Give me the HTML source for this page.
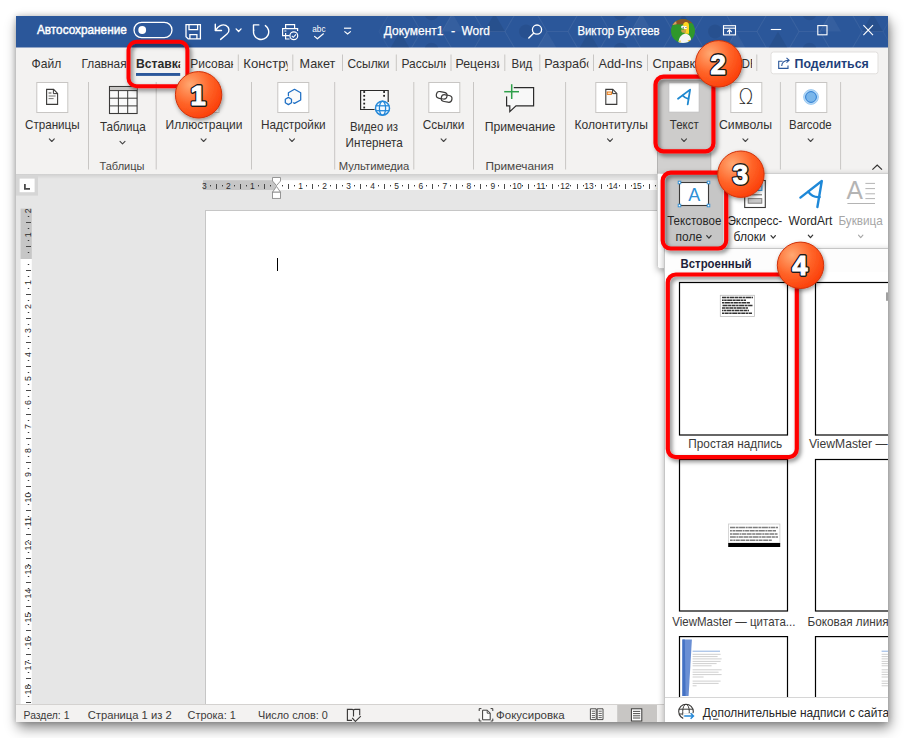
<!DOCTYPE html>
<html lang="ru">
<head>
<meta charset="utf-8">
<title>Документ1 - Word</title>
<style>
html,body{margin:0;padding:0;background:#fff;}
body{width:904px;height:738px;overflow:hidden;position:relative;font-family:"Liberation Sans", sans-serif;}
#shadow{position:absolute;left:16px;top:16px;width:872px;height:706px;box-shadow:2px 6px 12px rgba(0,0,0,.46), 0 0 6px rgba(0,0,0,.20);background:#f3f2f1;}
svg{position:absolute;left:0;top:0;}
svg text{font-family:"Liberation Sans", sans-serif;white-space:pre;}
</style>
</head>
<body>
<div id="shadow"></div>
<svg width="904" height="738" viewBox="0 0 904 738">
<defs>
<clipPath id="win"><rect x="16" y="16" width="872" height="706"/></clipPath>
<radialGradient id="badge" cx="0.32" cy="0.28" r="0.85">
<stop offset="0" stop-color="#ffa872"/><stop offset="0.5" stop-color="#ff6428"/><stop offset="1" stop-color="#fa3602"/>
</radialGradient>
<filter id="ds" x="-20%" y="-20%" width="150%" height="150%"><feDropShadow dx="2" dy="2.5" stdDeviation="2.3" flood-color="#000" flood-opacity="0.5"/></filter>
<filter id="ds2" x="-20%" y="-20%" width="150%" height="150%"><feDropShadow dx="1" dy="2" stdDeviation="2" flood-color="#000" flood-opacity="0.4"/></filter>
<filter id="pshadow" x="-10%" y="-10%" width="120%" height="120%"><feDropShadow dx="0" dy="2" stdDeviation="3" flood-color="#000" flood-opacity="0.3"/></filter>
</defs>
<g clip-path="url(#win)">
<rect x="16" y="16" width="872" height="31.7" fill="#2b579a"/>
<rect x="16" y="47.7" width="872" height="126.3" fill="#f3f2f1"/>
<rect x="16" y="174" width="872" height="530" fill="#e6e6e6"/>
<rect x="16" y="704" width="872" height="18" fill="#f3f2f1"/>
<linearGradient id="rg" x1="0" y1="0" x2="0" y2="1"><stop offset="0" stop-color="#000" stop-opacity="0.10"/><stop offset="1" stop-color="#000" stop-opacity="0"/></linearGradient>
<rect x="16" y="174" width="872" height="5" fill="url(#rg)"/>
<clipPath id="tb"><rect x="16" y="16" width="872" height="31.7"/></clipPath><g clip-path="url(#tb)">
<polygon points="421.0,-4.9 410.5,13.3 389.5,13.3 379.0,-4.9 389.5,-23.1 410.5,-23.1" fill="none" stroke="#ffffff" stroke-opacity="0.035" stroke-width="1.2"/>
<polygon points="389.5,13.3 410.5,13.3 400.0,-4.9" fill="#000" fill-opacity="0.08"/>
<polygon points="421.0,31.5 410.5,49.7 389.5,49.7 379.0,31.5 389.5,13.3 410.5,13.3" fill="none" stroke="#ffffff" stroke-opacity="0.035" stroke-width="1.2"/>
<polygon points="389.5,49.7 410.5,49.7 400.0,31.5" fill="#000" fill-opacity="0.08"/>
<polygon points="421.0,67.9 410.5,86.1 389.5,86.1 379.0,67.9 389.5,49.7 410.5,49.7" fill="none" stroke="#ffffff" stroke-opacity="0.035" stroke-width="1.2"/>
<polygon points="389.5,86.1 410.5,86.1 400.0,67.9" fill="#000" fill-opacity="0.08"/>
<polygon points="452.5,13.3 442.0,31.5 421.0,31.5 410.5,13.3 421.0,-4.9 442.0,-4.9" fill="none" stroke="#ffffff" stroke-opacity="0.035" stroke-width="1.2"/>
<circle cx="431.5" cy="13.3" r="7" fill="#000" fill-opacity="0.07"/>
<polygon points="452.5,49.7 442.0,67.9 421.0,67.9 410.5,49.7 421.0,31.5 442.0,31.5" fill="none" stroke="#ffffff" stroke-opacity="0.035" stroke-width="1.2"/>
<circle cx="431.5" cy="49.7" r="7" fill="#000" fill-opacity="0.07"/>
<polygon points="452.5,86.1 442.0,104.2 421.0,104.2 410.5,86.1 421.0,67.9 442.0,67.9" fill="none" stroke="#ffffff" stroke-opacity="0.035" stroke-width="1.2"/>
<circle cx="431.5" cy="86.1" r="7" fill="#000" fill-opacity="0.07"/>
<polygon points="484.0,-4.9 473.5,13.3 452.5,13.3 442.0,-4.9 452.5,-23.1 473.5,-23.1" fill="none" stroke="#ffffff" stroke-opacity="0.035" stroke-width="1.2"/>
<polygon points="442.0,-4.9 452.5,-23.1 463.0,-4.9" fill="#fff" fill-opacity="0.05"/>
<polygon points="484.0,31.5 473.5,49.7 452.5,49.7 442.0,31.5 452.5,13.3 473.5,13.3" fill="none" stroke="#ffffff" stroke-opacity="0.035" stroke-width="1.2"/>
<polygon points="442.0,31.5 452.5,13.3 463.0,31.5" fill="#fff" fill-opacity="0.05"/>
<polygon points="484.0,67.9 473.5,86.1 452.5,86.1 442.0,67.9 452.5,49.7 473.5,49.7" fill="none" stroke="#ffffff" stroke-opacity="0.035" stroke-width="1.2"/>
<polygon points="442.0,67.9 452.5,49.7 463.0,67.9" fill="#fff" fill-opacity="0.05"/>
<polygon points="515.5,13.3 505.0,31.5 484.0,31.5 473.5,13.3 484.0,-4.9 505.0,-4.9" fill="none" stroke="#ffffff" stroke-opacity="0.035" stroke-width="1.2"/>
<polygon points="484.0,31.5 505.0,31.5 494.5,13.3" fill="#000" fill-opacity="0.08"/>
<polygon points="515.5,49.7 505.0,67.9 484.0,67.9 473.5,49.7 484.0,31.5 505.0,31.5" fill="none" stroke="#ffffff" stroke-opacity="0.035" stroke-width="1.2"/>
<polygon points="484.0,67.9 505.0,67.9 494.5,49.7" fill="#000" fill-opacity="0.08"/>
<polygon points="515.5,86.1 505.0,104.2 484.0,104.2 473.5,86.1 484.0,67.9 505.0,67.9" fill="none" stroke="#ffffff" stroke-opacity="0.035" stroke-width="1.2"/>
<polygon points="484.0,104.2 505.0,104.2 494.5,86.1" fill="#000" fill-opacity="0.08"/>
<polygon points="547.0,-4.9 536.5,13.3 515.5,13.3 505.0,-4.9 515.5,-23.1 536.5,-23.1" fill="none" stroke="#ffffff" stroke-opacity="0.035" stroke-width="1.2"/>
<circle cx="526.0" cy="-4.9" r="7" fill="#000" fill-opacity="0.07"/>
<polygon points="547.0,31.5 536.5,49.7 515.5,49.7 505.0,31.5 515.5,13.3 536.5,13.3" fill="none" stroke="#ffffff" stroke-opacity="0.035" stroke-width="1.2"/>
<circle cx="526.0" cy="31.5" r="7" fill="#000" fill-opacity="0.07"/>
<polygon points="547.0,67.9 536.5,86.1 515.5,86.1 505.0,67.9 515.5,49.7 536.5,49.7" fill="none" stroke="#ffffff" stroke-opacity="0.035" stroke-width="1.2"/>
<circle cx="526.0" cy="67.9" r="7" fill="#000" fill-opacity="0.07"/>
<polygon points="578.5,13.3 568.0,31.5 547.0,31.5 536.5,13.3 547.0,-4.9 568.0,-4.9" fill="none" stroke="#ffffff" stroke-opacity="0.035" stroke-width="1.2"/>
<polygon points="536.5,13.3 547.0,-4.9 557.5,13.3" fill="#fff" fill-opacity="0.05"/>
<polygon points="578.5,49.7 568.0,67.9 547.0,67.9 536.5,49.7 547.0,31.5 568.0,31.5" fill="none" stroke="#ffffff" stroke-opacity="0.035" stroke-width="1.2"/>
<polygon points="536.5,49.7 547.0,31.5 557.5,49.7" fill="#fff" fill-opacity="0.05"/>
<polygon points="578.5,86.1 568.0,104.2 547.0,104.2 536.5,86.1 547.0,67.9 568.0,67.9" fill="none" stroke="#ffffff" stroke-opacity="0.035" stroke-width="1.2"/>
<polygon points="536.5,86.1 547.0,67.9 557.5,86.1" fill="#fff" fill-opacity="0.05"/>
<polygon points="610.0,-4.9 599.5,13.3 578.5,13.3 568.0,-4.9 578.5,-23.1 599.5,-23.1" fill="none" stroke="#ffffff" stroke-opacity="0.035" stroke-width="1.2"/>
<polygon points="578.5,13.3 599.5,13.3 589.0,-4.9" fill="#000" fill-opacity="0.08"/>
<polygon points="610.0,31.5 599.5,49.7 578.5,49.7 568.0,31.5 578.5,13.3 599.5,13.3" fill="none" stroke="#ffffff" stroke-opacity="0.035" stroke-width="1.2"/>
<polygon points="578.5,49.7 599.5,49.7 589.0,31.5" fill="#000" fill-opacity="0.08"/>
<polygon points="610.0,67.9 599.5,86.1 578.5,86.1 568.0,67.9 578.5,49.7 599.5,49.7" fill="none" stroke="#ffffff" stroke-opacity="0.035" stroke-width="1.2"/>
<polygon points="578.5,86.1 599.5,86.1 589.0,67.9" fill="#000" fill-opacity="0.08"/>
<polygon points="641.5,13.3 631.0,31.5 610.0,31.5 599.5,13.3 610.0,-4.9 631.0,-4.9" fill="none" stroke="#ffffff" stroke-opacity="0.035" stroke-width="1.2"/>
<circle cx="620.5" cy="13.3" r="7" fill="#000" fill-opacity="0.07"/>
<polygon points="641.5,49.7 631.0,67.9 610.0,67.9 599.5,49.7 610.0,31.5 631.0,31.5" fill="none" stroke="#ffffff" stroke-opacity="0.035" stroke-width="1.2"/>
<circle cx="620.5" cy="49.7" r="7" fill="#000" fill-opacity="0.07"/>
<polygon points="641.5,86.1 631.0,104.2 610.0,104.2 599.5,86.1 610.0,67.9 631.0,67.9" fill="none" stroke="#ffffff" stroke-opacity="0.035" stroke-width="1.2"/>
<circle cx="620.5" cy="86.1" r="7" fill="#000" fill-opacity="0.07"/>
<polygon points="673.0,-4.9 662.5,13.3 641.5,13.3 631.0,-4.9 641.5,-23.1 662.5,-23.1" fill="none" stroke="#ffffff" stroke-opacity="0.035" stroke-width="1.2"/>
<polygon points="631.0,-4.9 641.5,-23.1 652.0,-4.9" fill="#fff" fill-opacity="0.05"/>
<polygon points="673.0,31.5 662.5,49.7 641.5,49.7 631.0,31.5 641.5,13.3 662.5,13.3" fill="none" stroke="#ffffff" stroke-opacity="0.035" stroke-width="1.2"/>
<polygon points="631.0,31.5 641.5,13.3 652.0,31.5" fill="#fff" fill-opacity="0.05"/>
<polygon points="673.0,67.9 662.5,86.1 641.5,86.1 631.0,67.9 641.5,49.7 662.5,49.7" fill="none" stroke="#ffffff" stroke-opacity="0.035" stroke-width="1.2"/>
<polygon points="631.0,67.9 641.5,49.7 652.0,67.9" fill="#fff" fill-opacity="0.05"/>
<polygon points="704.5,13.3 694.0,31.5 673.0,31.5 662.5,13.3 673.0,-4.9 694.0,-4.9" fill="none" stroke="#ffffff" stroke-opacity="0.035" stroke-width="1.2"/>
<polygon points="673.0,31.5 694.0,31.5 683.5,13.3" fill="#000" fill-opacity="0.08"/>
<polygon points="704.5,49.7 694.0,67.9 673.0,67.9 662.5,49.7 673.0,31.5 694.0,31.5" fill="none" stroke="#ffffff" stroke-opacity="0.035" stroke-width="1.2"/>
<polygon points="673.0,67.9 694.0,67.9 683.5,49.7" fill="#000" fill-opacity="0.08"/>
<polygon points="704.5,86.1 694.0,104.2 673.0,104.2 662.5,86.1 673.0,67.9 694.0,67.9" fill="none" stroke="#ffffff" stroke-opacity="0.035" stroke-width="1.2"/>
<polygon points="673.0,104.2 694.0,104.2 683.5,86.1" fill="#000" fill-opacity="0.08"/>
<polygon points="736.0,-4.9 725.5,13.3 704.5,13.3 694.0,-4.9 704.5,-23.1 725.5,-23.1" fill="none" stroke="#ffffff" stroke-opacity="0.035" stroke-width="1.2"/>
<circle cx="715.0" cy="-4.9" r="7" fill="#000" fill-opacity="0.07"/>
<polygon points="736.0,31.5 725.5,49.7 704.5,49.7 694.0,31.5 704.5,13.3 725.5,13.3" fill="none" stroke="#ffffff" stroke-opacity="0.035" stroke-width="1.2"/>
<circle cx="715.0" cy="31.5" r="7" fill="#000" fill-opacity="0.07"/>
<polygon points="736.0,67.9 725.5,86.1 704.5,86.1 694.0,67.9 704.5,49.7 725.5,49.7" fill="none" stroke="#ffffff" stroke-opacity="0.035" stroke-width="1.2"/>
<circle cx="715.0" cy="67.9" r="7" fill="#000" fill-opacity="0.07"/>
<polygon points="767.5,13.3 757.0,31.5 736.0,31.5 725.5,13.3 736.0,-4.9 757.0,-4.9" fill="none" stroke="#ffffff" stroke-opacity="0.035" stroke-width="1.2"/>
<polygon points="725.5,13.3 736.0,-4.9 746.5,13.3" fill="#fff" fill-opacity="0.05"/>
<polygon points="767.5,49.7 757.0,67.9 736.0,67.9 725.5,49.7 736.0,31.5 757.0,31.5" fill="none" stroke="#ffffff" stroke-opacity="0.035" stroke-width="1.2"/>
<polygon points="725.5,49.7 736.0,31.5 746.5,49.7" fill="#fff" fill-opacity="0.05"/>
<polygon points="767.5,86.1 757.0,104.2 736.0,104.2 725.5,86.1 736.0,67.9 757.0,67.9" fill="none" stroke="#ffffff" stroke-opacity="0.035" stroke-width="1.2"/>
<polygon points="725.5,86.1 736.0,67.9 746.5,86.1" fill="#fff" fill-opacity="0.05"/>
<polygon points="799.0,-4.9 788.5,13.3 767.5,13.3 757.0,-4.9 767.5,-23.1 788.5,-23.1" fill="none" stroke="#ffffff" stroke-opacity="0.035" stroke-width="1.2"/>
<polygon points="767.5,13.3 788.5,13.3 778.0,-4.9" fill="#000" fill-opacity="0.08"/>
<polygon points="799.0,31.5 788.5,49.7 767.5,49.7 757.0,31.5 767.5,13.3 788.5,13.3" fill="none" stroke="#ffffff" stroke-opacity="0.035" stroke-width="1.2"/>
<polygon points="767.5,49.7 788.5,49.7 778.0,31.5" fill="#000" fill-opacity="0.08"/>
<polygon points="799.0,67.9 788.5,86.1 767.5,86.1 757.0,67.9 767.5,49.7 788.5,49.7" fill="none" stroke="#ffffff" stroke-opacity="0.035" stroke-width="1.2"/>
<polygon points="767.5,86.1 788.5,86.1 778.0,67.9" fill="#000" fill-opacity="0.08"/>
<polygon points="830.5,13.3 820.0,31.5 799.0,31.5 788.5,13.3 799.0,-4.9 820.0,-4.9" fill="none" stroke="#ffffff" stroke-opacity="0.035" stroke-width="1.2"/>
<circle cx="809.5" cy="13.3" r="7" fill="#000" fill-opacity="0.07"/>
<polygon points="830.5,49.7 820.0,67.9 799.0,67.9 788.5,49.7 799.0,31.5 820.0,31.5" fill="none" stroke="#ffffff" stroke-opacity="0.035" stroke-width="1.2"/>
<circle cx="809.5" cy="49.7" r="7" fill="#000" fill-opacity="0.07"/>
<polygon points="830.5,86.1 820.0,104.2 799.0,104.2 788.5,86.1 799.0,67.9 820.0,67.9" fill="none" stroke="#ffffff" stroke-opacity="0.035" stroke-width="1.2"/>
<circle cx="809.5" cy="86.1" r="7" fill="#000" fill-opacity="0.07"/>
<polygon points="862.0,-4.9 851.5,13.3 830.5,13.3 820.0,-4.9 830.5,-23.1 851.5,-23.1" fill="none" stroke="#ffffff" stroke-opacity="0.035" stroke-width="1.2"/>
<polygon points="820.0,-4.9 830.5,-23.1 841.0,-4.9" fill="#fff" fill-opacity="0.05"/>
<polygon points="862.0,31.5 851.5,49.7 830.5,49.7 820.0,31.5 830.5,13.3 851.5,13.3" fill="none" stroke="#ffffff" stroke-opacity="0.035" stroke-width="1.2"/>
<polygon points="820.0,31.5 830.5,13.3 841.0,31.5" fill="#fff" fill-opacity="0.05"/>
<polygon points="862.0,67.9 851.5,86.1 830.5,86.1 820.0,67.9 830.5,49.7 851.5,49.7" fill="none" stroke="#ffffff" stroke-opacity="0.035" stroke-width="1.2"/>
<polygon points="820.0,67.9 830.5,49.7 841.0,67.9" fill="#fff" fill-opacity="0.05"/>
<polygon points="893.5,13.3 883.0,31.5 862.0,31.5 851.5,13.3 862.0,-4.9 883.0,-4.9" fill="none" stroke="#ffffff" stroke-opacity="0.035" stroke-width="1.2"/>
<polygon points="862.0,31.5 883.0,31.5 872.5,13.3" fill="#000" fill-opacity="0.08"/>
<polygon points="893.5,49.7 883.0,67.9 862.0,67.9 851.5,49.7 862.0,31.5 883.0,31.5" fill="none" stroke="#ffffff" stroke-opacity="0.035" stroke-width="1.2"/>
<polygon points="862.0,67.9 883.0,67.9 872.5,49.7" fill="#000" fill-opacity="0.08"/>
<polygon points="893.5,86.1 883.0,104.2 862.0,104.2 851.5,86.1 862.0,67.9 883.0,67.9" fill="none" stroke="#ffffff" stroke-opacity="0.035" stroke-width="1.2"/>
<polygon points="862.0,104.2 883.0,104.2 872.5,86.1" fill="#000" fill-opacity="0.08"/>
</g>
<text x="37.0" y="34.3" font-size="12.8" font-weight="400" fill="#ffffff" textLength="89.8" lengthAdjust="spacingAndGlyphs" stroke="#ffffff" stroke-width="0.45">Автосохранение</text>
<rect x="134" y="22.3" width="38" height="15.4" fill="none" stroke="#ffffff" stroke-width="1.3" rx="7.7"/>
<circle cx="142.2" cy="30" r="3.9" fill="#fff"/>
<path d="M186 24.6 H200.4 V38.9 H188.2 L186 36.7 Z" fill="none" stroke="#ffffff" stroke-width="1.3" stroke-linejoin="miter"/>
<path d="M189 24.6 V29.6 H197.6 V24.6" fill="none" stroke="#ffffff" stroke-width="1.3"/>
<path d="M189.9 38.9 V34.7 H196.9 V38.9" fill="none" stroke="#ffffff" stroke-width="1.3"/>
<path d="M215.3 24.2 V30.5 H221.5" fill="none" stroke="#ffffff" stroke-width="1.4" stroke-linecap="round" stroke-linejoin="round"/>
<path d="M215.6 30.3 C218 26 222.4 23.8 225.8 25.4 C229.8 27.4 229.8 31.8 227 34 L220.6 39.4" fill="none" stroke="#ffffff" stroke-width="1.4" stroke-linecap="round"/>
<path d="M236.1 28.9 L238.6 31.5 L241.1 28.9" fill="none" stroke="#ffffff" stroke-width="1.3" stroke-linecap="round" stroke-linejoin="round"/>
<path d="M258.8 24.9 H253.5 V30.6" fill="none" stroke="#ffffff" stroke-width="1.4" stroke-linecap="round" stroke-linejoin="round"/>
<path d="M265.4 25.6 A7.6 7.6 0 1 1 253.7 30.2" fill="none" stroke="#ffffff" stroke-width="1.4" stroke-linecap="round"/>
<path d="M285.6 28.4 V24.6 H294.6 V28.4" fill="none" stroke="#ffffff" stroke-width="1.2"/>
<path d="M289.6 35.6 H282.6 V28.6 H297.6 V31" fill="none" stroke="#ffffff" stroke-width="1.2"/>
<path d="M285.6 33 V39 H289.6" fill="none" stroke="#ffffff" stroke-width="1.2"/>
<circle cx="293.8" cy="35.8" r="3.9" fill="none" stroke="#fff" stroke-width="1.2"/>
<path d="M291.8 35.8 L293.3 37.3 L296 34.4" fill="none" stroke="#ffffff" stroke-width="1.1"/>
<line x1="284.4" y1="31" x2="286.4" y2="31" stroke="#ffffff" stroke-width="1"/>
<text x="312.3" y="31.6" font-size="9.6" font-weight="400" fill="#ffffff" textLength="13.2" lengthAdjust="spacingAndGlyphs">abc</text>
<path d="M314.6 36.4 L317.4 38.8 L323.4 33.8" fill="none" stroke="#ffffff" stroke-width="1.2" stroke-linecap="round" stroke-linejoin="round"/>
<line x1="344" y1="28.2" x2="351.2" y2="28.2" stroke="#ffffff" stroke-width="1.2"/>
<path d="M344.4 31.4 L347.6 34 L350.8 31.4" fill="none" stroke="#ffffff" stroke-width="1.2"/>
<text x="383.8" y="34.8" font-size="12.6" font-weight="400" fill="#ffffff" textLength="59.6" lengthAdjust="spacingAndGlyphs" stroke="#ffffff" stroke-width="0.25">Документ1</text>
<text x="451.0" y="34.8" font-size="12.6" font-weight="400" fill="#ffffff" textLength="4.2" lengthAdjust="spacingAndGlyphs" stroke="#ffffff" stroke-width="0.25">-</text>
<text x="461.6" y="34.8" font-size="12.6" font-weight="400" fill="#ffffff" textLength="28.2" lengthAdjust="spacingAndGlyphs" stroke="#ffffff" stroke-width="0.25">Word</text>
<circle cx="537" cy="29.6" r="4.6" fill="none" stroke="#fff" stroke-width="1.3"/>
<line x1="533.6" y1="33.2" x2="528.8" y2="38" stroke="#ffffff" stroke-width="1.4" stroke-linecap="round"/>
<text x="577.4" y="35.4" font-size="12.4" font-weight="400" fill="#ffffff" textLength="82.2" lengthAdjust="spacingAndGlyphs" stroke="#ffffff" stroke-width="0.25">Виктор Бухтеев</text>
<clipPath id="av"><circle cx="683" cy="31" r="12"/></clipPath>
<g clip-path="url(#av)">
<rect x="670" y="18" width="26" height="26" fill="#2f982b"/>
<path d="M670 18 H696 V23.6 L690 23 L683 24.6 L676 24.2 L670 25.4 Z" fill="#8a5426"/>
<path d="M672 21.4 L676 20 L676.6 24.2 L672.4 25 Z" fill="#d9a066"/>
<path d="M683.2 25.6 C683 22.4 685 21.8 686.4 21.9 C688.6 22 689.2 24 689 27 V33.8 H684.6 V31.6 Z" fill="#ffd521"/>
<ellipse cx="682.8" cy="27" rx="1.7" ry="1.5" fill="#fff"/><ellipse cx="685.4" cy="27.4" rx="1.7" ry="1.5" fill="#fff"/>
<circle cx="683.2" cy="27.2" r="0.5" fill="#111"/><circle cx="686" cy="27.4" r="0.5" fill="#111"/>
<path d="M681.2 29.4 H686 V32.8 H683 C681.6 32.4 681 31 681.2 29.4 Z" fill="#c9a34a"/>
<path d="M678.4 43.5 C678.6 38 681 34.2 685.6 33.8 C690 34 691.6 38 691.2 43.5 Z" fill="#f4f4f6"/>
<path d="M678.6 41.2 L680.4 40.2 L680.8 42.6 Z M687.4 40.8 L690.6 39.6 L689.6 42 Z" fill="#f2c318"/>
</g>
<rect x="723.5" y="25.7" width="12" height="9.2" fill="none" stroke="#ffffff" stroke-width="1.1"/>
<line x1="723.5" y1="28.2" x2="735.5" y2="28.2" stroke="#ffffff" stroke-width="1.1"/>
<path d="M729.5 34 V30 M727.3 32 L729.5 29.8 L731.7 32" fill="none" stroke="#ffffff" stroke-width="1.1"/>
<line x1="770.8" y1="29.5" x2="781.2" y2="29.5" stroke="#ffffff" stroke-width="1.1"/>
<rect x="817.8" y="25.6" width="9.2" height="9.2" fill="none" stroke="#ffffff" stroke-width="1.1"/>
<path d="M863.4 25.2 L873 35.2 M873 25.2 L863.4 35.2" fill="none" stroke="#ffffff" stroke-width="1.15"/>
<text x="31.5" y="68.3" font-size="12.7" font-weight="400" fill="#323130" textLength="29.7" lengthAdjust="spacingAndGlyphs">Файл</text>
<text x="81.5" y="68.3" font-size="12.7" font-weight="400" fill="#323130" textLength="45.1" lengthAdjust="spacingAndGlyphs">Главная</text>
<clipPath id="c1"><rect x="130" y="50" width="50.2" height="24"/></clipPath>
<text x="135.9" y="67.5" font-size="12.7" font-weight="700" fill="#2b2b2b" textLength="48.7" lengthAdjust="spacingAndGlyphs" clip-path="url(#c1)">Вставка</text>
<rect x="136" y="73" width="44.2" height="2.9" fill="#2b579a"/>
<clipPath id="t1"><rect x="185" y="50" width="48.19999999999999" height="24"/></clipPath>
<text x="190.2" y="68.3" font-size="12.7" font-weight="400" fill="#323130" textLength="60.4" lengthAdjust="spacingAndGlyphs" clip-path="url(#t1)">Рисование</text>
<clipPath id="t2"><rect x="240" y="50" width="47.60000000000002" height="24"/></clipPath>
<text x="243.3" y="68.3" font-size="12.7" font-weight="400" fill="#323130" textLength="75.1" lengthAdjust="spacingAndGlyphs" clip-path="url(#t2)">Конструктор</text>
<text x="299.5" y="68.3" font-size="12.7" font-weight="400" fill="#323130" textLength="35.8" lengthAdjust="spacingAndGlyphs">Макет</text>
<text x="347.5" y="68.3" font-size="12.7" font-weight="400" fill="#323130" textLength="42.0" lengthAdjust="spacingAndGlyphs">Ссылки</text>
<clipPath id="t3"><rect x="398" y="50" width="48" height="24"/></clipPath>
<text x="401.5" y="68.3" font-size="12.7" font-weight="400" fill="#323130" textLength="53.8" lengthAdjust="spacingAndGlyphs" clip-path="url(#t3)">Рассылки</text>
<clipPath id="t4"><rect x="452" y="50" width="47.39999999999998" height="24"/></clipPath>
<text x="455.5" y="68.3" font-size="12.7" font-weight="400" fill="#323130" textLength="95.5" lengthAdjust="spacingAndGlyphs" clip-path="url(#t4)">Рецензирование</text>
<text x="511.5" y="68.3" font-size="12.7" font-weight="400" fill="#323130" textLength="20.8" lengthAdjust="spacingAndGlyphs">Вид</text>
<clipPath id="t5"><rect x="541" y="50" width="47.60000000000002" height="24"/></clipPath>
<text x="544.3" y="68.3" font-size="12.7" font-weight="400" fill="#323130" textLength="73.7" lengthAdjust="spacingAndGlyphs" clip-path="url(#t5)">Разработчик</text>
<text x="598.5" y="68.3" font-size="12.7" font-weight="400" fill="#323130" textLength="43.8" lengthAdjust="spacingAndGlyphs">Add-Ins</text>
<clipPath id="t6"><rect x="650" y="50" width="47" height="24"/></clipPath>
<text x="652.5" y="68.3" font-size="12.7" font-weight="400" fill="#323130" textLength="50.0" lengthAdjust="spacingAndGlyphs" clip-path="url(#t6)">Справка</text>
<clipPath id="t7"><rect x="704" y="50" width="48" height="24"/></clipPath>
<text x="705.2" y="68.3" font-size="12.7" font-weight="400" fill="#323130" textLength="52.0" lengthAdjust="spacingAndGlyphs" clip-path="url(#t7)">Foxit PDF</text>
<line x1="238.3" y1="54.5" x2="238.3" y2="71" stroke="#c8c6c4" stroke-width="1"/>
<line x1="292.8" y1="54.5" x2="292.8" y2="71" stroke="#c8c6c4" stroke-width="1"/>
<line x1="342.5" y1="54.5" x2="342.5" y2="71" stroke="#c8c6c4" stroke-width="1"/>
<line x1="396.3" y1="54.5" x2="396.3" y2="71" stroke="#c8c6c4" stroke-width="1"/>
<line x1="451" y1="54.5" x2="451" y2="71" stroke="#c8c6c4" stroke-width="1"/>
<line x1="504.8" y1="54.5" x2="504.8" y2="71" stroke="#c8c6c4" stroke-width="1"/>
<line x1="539.8" y1="54.5" x2="539.8" y2="71" stroke="#c8c6c4" stroke-width="1"/>
<line x1="593.5" y1="54.5" x2="593.5" y2="71" stroke="#c8c6c4" stroke-width="1"/>
<line x1="647.5" y1="54.5" x2="647.5" y2="71" stroke="#c8c6c4" stroke-width="1"/>
<line x1="701.4" y1="54.5" x2="701.4" y2="71" stroke="#c8c6c4" stroke-width="1"/>
<line x1="756.8" y1="54.5" x2="756.8" y2="71" stroke="#c8c6c4" stroke-width="1"/>
<rect x="771" y="52" width="107" height="21.8" fill="#ffffff" stroke="#e1dfdd" stroke-width="1" rx="2.5"/>
<path d="M782.6 61.3 H778.7 V68.4 H788 V65.6" fill="none" stroke="#2b579a" stroke-width="1.1"/>
<path d="M781.7 66 C781.8 62.6 784.2 60.5 788.8 60.3 M786.5 57.9 L789.1 60.3 L786.5 62.7" fill="none" stroke="#2b579a" stroke-width="1.1"/>
<text x="794.6" y="68.3" font-size="12.7" font-weight="700" fill="#1e3f7a" textLength="74.2" lengthAdjust="spacingAndGlyphs">Поделиться</text>
<line x1="88.5" y1="82" x2="88.5" y2="169.5" stroke="#c8c6c4" stroke-width="1"/>
<line x1="156.2" y1="82" x2="156.2" y2="169.5" stroke="#c8c6c4" stroke-width="1"/>
<line x1="251.5" y1="82" x2="251.5" y2="169.5" stroke="#c8c6c4" stroke-width="1"/>
<line x1="334.7" y1="82" x2="334.7" y2="169.5" stroke="#c8c6c4" stroke-width="1"/>
<line x1="413.8" y1="82" x2="413.8" y2="169.5" stroke="#c8c6c4" stroke-width="1"/>
<line x1="473.5" y1="82" x2="473.5" y2="169.5" stroke="#c8c6c4" stroke-width="1"/>
<line x1="565.6" y1="82" x2="565.6" y2="169.5" stroke="#c8c6c4" stroke-width="1"/>
<line x1="780.4" y1="82" x2="780.4" y2="169.5" stroke="#c8c6c4" stroke-width="1"/>
<line x1="840.6" y1="82" x2="840.6" y2="169.5" stroke="#c8c6c4" stroke-width="1"/>
<rect x="657" y="80" width="54" height="93.6" fill="#d1d0cf"/>
<rect x="657" y="80" width="54" height="73" fill="#cdcccb"/>
<line x1="657.5" y1="150" x2="657.5" y2="173.6" stroke="#b4b3b2" stroke-width="1"/>
<line x1="710.8" y1="150" x2="710.8" y2="173.6" stroke="#bcbbba" stroke-width="1"/>
<rect x="36.8" y="82.5" width="31" height="30" fill="#ffffff" stroke="#c8c6c4" stroke-width="1"/>
<path d="M46.6 89.4 H53.6 L57.6 93.4 V104.4 H46.6 Z" fill="#fafafa" stroke="#3b3a39" stroke-width="1.1"/>
<path d="M53.4 89.6 V93.6 H57.4" fill="none" stroke="#3b3a39" stroke-width="1"/>
<line x1="48.6" y1="93" x2="51.4" y2="93" stroke="#605e5c" stroke-width="1.2"/>
<line x1="48.6" y1="96" x2="55.6" y2="96" stroke="#797775" stroke-width="1"/>
<line x1="48.6" y1="98.6" x2="53.6" y2="98.6" stroke="#797775" stroke-width="1"/>
<text x="25.0" y="129.2" font-size="12.1" font-weight="400" fill="#323130" textLength="54.6" lengthAdjust="spacingAndGlyphs">Страницы</text>
<path d="M49.3 138.9 L51.8 141.5 L54.3 138.9" fill="none" stroke="#444" stroke-width="1.1" stroke-linecap="round" stroke-linejoin="round"/>
<rect x="109.5" y="86.5" width="27.6" height="27" fill="#fafafa" stroke="#3b3a39" stroke-width="1.1"/>
<rect x="110" y="87" width="26.6" height="3.6" fill="#c8c6c4"/>
<line x1="118.4" y1="90.6" x2="118.4" y2="113.5" stroke="#3b3a39" stroke-width="1"/>
<line x1="127.7" y1="90.6" x2="127.7" y2="113.5" stroke="#3b3a39" stroke-width="1"/>
<line x1="109.5" y1="90.6" x2="137.1" y2="90.6" stroke="#3b3a39" stroke-width="1"/>
<line x1="109.5" y1="98.2" x2="137.1" y2="98.2" stroke="#3b3a39" stroke-width="1"/>
<line x1="109.5" y1="105.9" x2="137.1" y2="105.9" stroke="#3b3a39" stroke-width="1"/>
<text x="100.0" y="131.0" font-size="12.1" font-weight="400" fill="#323130" textLength="45.8" lengthAdjust="spacingAndGlyphs">Таблица</text>
<path d="M120.0 141.3 L122.5 143.9 L125.0 141.3" fill="none" stroke="#444" stroke-width="1.1" stroke-linecap="round" stroke-linejoin="round"/>
<text x="99.5" y="169.6" font-size="11.7" font-weight="400" fill="#484644" textLength="45.0" lengthAdjust="spacingAndGlyphs">Таблицы</text>
<rect x="188.0" y="82.5" width="31" height="30" fill="#ffffff" stroke="#c8c6c4" stroke-width="1"/>
<text x="165.6" y="129.2" font-size="12.1" font-weight="400" fill="#323130" textLength="76.9" lengthAdjust="spacingAndGlyphs">Иллюстрации</text>
<path d="M201.1 138.9 L203.6 141.5 L206.1 138.9" fill="none" stroke="#444" stroke-width="1.1" stroke-linecap="round" stroke-linejoin="round"/>
<rect x="277.8" y="82.5" width="31" height="30" fill="#ffffff" stroke="#c8c6c4" stroke-width="1"/>
<path d="M288.4 95.6 V92.8 L294.5 89.3 L300.7 92.8 V100 L294.5 103.4 L293.4 102.8" fill="#fafafa" stroke="#1e6fc4" stroke-width="1.25" stroke-linejoin="round" stroke-linecap="round"/>
<path d="M291.5 102.8 L288.4 104.6 L285.3 102.8 L285.3 99.2 L288.4 97.4 L291.5 99.2 Z" fill="#fbfbfb" stroke="#1e6fc4" stroke-width="1.25" stroke-linejoin="round"/>
<text x="261.0" y="129.2" font-size="12.1" font-weight="400" fill="#323130" textLength="64.7" lengthAdjust="spacingAndGlyphs">Надстройки</text>
<path d="M289.5 138.9 L292.0 141.5 L294.5 138.9" fill="none" stroke="#444" stroke-width="1.1" stroke-linecap="round" stroke-linejoin="round"/>
<path d="M388.2 102 V90.5 H360.6 V109.5 H374.6" fill="#f8f8f8" stroke="#2b2b2b" stroke-width="1.2"/>
<rect x="363.3" y="91.1" width="1.8" height="1.8" fill="#1f1f1f"/>
<rect x="363.3" y="94.89999999999999" width="1.8" height="1.8" fill="#1f1f1f"/>
<rect x="363.3" y="98.8" width="1.8" height="1.8" fill="#1f1f1f"/>
<rect x="363.3" y="102.69999999999999" width="1.8" height="1.8" fill="#1f1f1f"/>
<rect x="363.3" y="106.6" width="1.8" height="1.8" fill="#1f1f1f"/>
<rect x="383.2" y="91.1" width="1.8" height="1.8" fill="#1f1f1f"/>
<rect x="383.2" y="94.89999999999999" width="1.8" height="1.8" fill="#1f1f1f"/>
<circle cx="382.5" cy="108.2" r="7" fill="#f3f9ff" stroke="#2488d8" stroke-width="1.5"/>
<ellipse cx="382.5" cy="108.2" rx="3.1" ry="7" fill="none" stroke="#2488d8" stroke-width="1.3"/>
<line x1="375.6" y1="105.8" x2="389.4" y2="105.8" stroke="#2488d8" stroke-width="1.3"/>
<line x1="375.6" y1="110.7" x2="389.4" y2="110.7" stroke="#2488d8" stroke-width="1.3"/>
<text x="350.0" y="131.0" font-size="12.1" font-weight="400" fill="#323130" textLength="48.0" lengthAdjust="spacingAndGlyphs">Видео из</text>
<text x="345.6" y="147.0" font-size="12.1" font-weight="400" fill="#323130" textLength="57.2" lengthAdjust="spacingAndGlyphs">Интернета</text>
<text x="338.7" y="169.6" font-size="11.7" font-weight="400" fill="#484644" textLength="70.5" lengthAdjust="spacingAndGlyphs">Мультимедиа</text>
<rect x="428.8" y="82.5" width="31" height="30" fill="#ffffff" stroke="#c8c6c4" stroke-width="1"/>
<rect x="436.3" y="91.9" width="10.8" height="6.8" rx="3.4" fill="none" stroke="#3b3a39" stroke-width="1.2" transform="rotate(10 441.7 95.3)"/>
<rect x="441.2" y="95.1" width="10.8" height="6.8" rx="3.4" fill="none" stroke="#3b3a39" stroke-width="1.2" transform="rotate(10 446.6 98.5)"/>
<text x="422.7" y="129.2" font-size="12.1" font-weight="400" fill="#323130" textLength="41.7" lengthAdjust="spacingAndGlyphs">Ссылки</text>
<path d="M441.1 138.9 L443.6 141.5 L446.1 138.9" fill="none" stroke="#444" stroke-width="1.1" stroke-linecap="round" stroke-linejoin="round"/>
<path d="M506.6 87.6 H533.6 V105.8 H516 L509.8 111.6 V105.8 H506.6 Z" fill="#f8f8f8" stroke="#2b2b2b" stroke-width="1.2"/>
<rect x="503" y="84" width="10.8" height="12.4" fill="#f3f2f1"/>
<line x1="504.2" y1="91.7" x2="519" y2="91.7" stroke="#2ea04a" stroke-width="1.5"/>
<line x1="511.7" y1="84.2" x2="511.7" y2="99" stroke="#2ea04a" stroke-width="1.5"/>
<text x="484.7" y="131.0" font-size="12.1" font-weight="400" fill="#323130" textLength="70.7" lengthAdjust="spacingAndGlyphs">Примечание</text>
<text x="485.4" y="169.6" font-size="11.7" font-weight="400" fill="#484644" textLength="68.2" lengthAdjust="spacingAndGlyphs">Примечания</text>
<rect x="595.8" y="82.5" width="31" height="30" fill="#ffffff" stroke="#c8c6c4" stroke-width="1"/>
<path d="M605.8 89.4 H612.8 L616.8 93.4 V104.4 H605.8 Z" fill="#fafafa" stroke="#3b3a39" stroke-width="1.1"/>
<path d="M612.6 89.6 V93.6 H616.6" fill="none" stroke="#3b3a39" stroke-width="1"/>
<rect x="607.2" y="92" width="4.2" height="2.4" fill="#fde3c0" stroke="#e8730c" stroke-width="0.9"/>
<text x="574.5" y="129.2" font-size="12.1" font-weight="400" fill="#323130" textLength="73.3" lengthAdjust="spacingAndGlyphs">Колонтитулы</text>
<path d="M607.5 138.9 L610.0 141.5 L612.5 138.9" fill="none" stroke="#444" stroke-width="1.1" stroke-linecap="round" stroke-linejoin="round"/>
<rect x="668.9" y="82.9" width="30.2" height="29.2" fill="#ffffff" stroke="#bebebe" stroke-width="0.8"/>
<path d="M678 98.8 L690.1 89.6 L687.7 104.3" fill="none" stroke="#1e88d0" stroke-width="1.8" stroke-linecap="round" stroke-linejoin="round"/>
<path d="M682.8 95.6 C684.4 97.4 686.4 98.4 688.4 98.8" fill="none" stroke="#1e88d0" stroke-width="1.7" stroke-linecap="round"/>
<text x="669.8" y="129.2" font-size="12.1" font-weight="400" fill="#323130" textLength="28.9" lengthAdjust="spacingAndGlyphs">Текст</text>
<path d="M681.5 138.9 L684.0 141.5 L686.5 138.9" fill="none" stroke="#444" stroke-width="1.1" stroke-linecap="round" stroke-linejoin="round"/>
<rect x="730.8" y="82.5" width="31" height="30" fill="#ffffff" stroke="#c8c6c4" stroke-width="1"/>
<text x="738.6" y="104.0" font-size="20.6" font-weight="200" fill="#2b2b2b" textLength="14.8" lengthAdjust="spacingAndGlyphs" style="font-family:'DejaVu Sans',sans-serif">Ω</text>
<text x="719.0" y="129.2" font-size="12.1" font-weight="400" fill="#323130" textLength="53.0" lengthAdjust="spacingAndGlyphs">Символы</text>
<path d="M742.9 138.9 L745.4 141.5 L747.9 138.9" fill="none" stroke="#444" stroke-width="1.1" stroke-linecap="round" stroke-linejoin="round"/>
<rect x="795.8" y="82.5" width="31" height="30" fill="#ffffff" stroke="#c8c6c4" stroke-width="1"/>
<circle cx="811" cy="97" r="7.4" fill="#b9daf6" stroke="#8cc2f0" stroke-width="0.8"/>
<circle cx="811" cy="97" r="5.4" fill="#7ab6ea" stroke="#2b7cd3" stroke-width="1"/>
<text x="789.0" y="129.2" font-size="12.1" font-weight="400" fill="#323130" textLength="42.7" lengthAdjust="spacingAndGlyphs">Barcode</text>
<path d="M808.1 138.9 L810.6 141.5 L813.1 138.9" fill="none" stroke="#444" stroke-width="1.1" stroke-linecap="round" stroke-linejoin="round"/>
<path d="M872.4 169.6 L877.2 165 L882 169.6" fill="none" stroke="#323130" stroke-width="1.2"/>
<rect x="16" y="175" width="22" height="20.6" fill="#d6d6d6"/>
<rect x="19.6" y="178.6" width="15" height="13.6" fill="#ffffff"/>
<path d="M24.9 184 V188.9 H30" fill="none" stroke="#4a4a4a" stroke-width="1.8"/>
<rect x="203" y="180.2" width="73.5" height="9.8" fill="#c6c6c6"/>
<rect x="276.5" y="180.2" width="400" height="9.8" fill="#ffffff"/>
<text x="202.0" y="189.0" font-size="9.5" font-weight="400" fill="#2a2a2a" textLength="4.7" lengthAdjust="spacingAndGlyphs">3</text>
<rect x="210" y="185" width="1" height="1.4" fill="#3a3a3a"/>
<rect x="216" y="184" width="1" height="5" fill="#4a4a4a"/>
<rect x="222" y="185" width="1" height="1.4" fill="#3a3a3a"/>
<text x="226.1" y="189.0" font-size="9.5" font-weight="400" fill="#2a2a2a" textLength="4.7" lengthAdjust="spacingAndGlyphs">2</text>
<rect x="234" y="185" width="1" height="1.4" fill="#3a3a3a"/>
<rect x="240" y="184" width="1" height="5" fill="#4a4a4a"/>
<rect x="246" y="185" width="1" height="1.4" fill="#3a3a3a"/>
<text x="250.1" y="189.0" font-size="9.5" font-weight="400" fill="#2a2a2a" textLength="4.7" lengthAdjust="spacingAndGlyphs">1</text>
<rect x="258" y="185" width="1" height="1.4" fill="#3a3a3a"/>
<rect x="264" y="184" width="1" height="5" fill="#4a4a4a"/>
<rect x="270" y="185" width="1" height="1.4" fill="#3a3a3a"/>
<rect x="282" y="185" width="1" height="1.4" fill="#3a3a3a"/>
<rect x="288" y="184" width="1" height="5" fill="#4a4a4a"/>
<rect x="294" y="185" width="1" height="1.4" fill="#3a3a3a"/>
<text x="298.2" y="189.0" font-size="9.5" font-weight="400" fill="#2a2a2a" textLength="4.7" lengthAdjust="spacingAndGlyphs">1</text>
<rect x="306" y="185" width="1" height="1.4" fill="#3a3a3a"/>
<rect x="312" y="184" width="1" height="5" fill="#4a4a4a"/>
<rect x="318" y="185" width="1" height="1.4" fill="#3a3a3a"/>
<text x="322.2" y="189.0" font-size="9.5" font-weight="400" fill="#2a2a2a" textLength="4.7" lengthAdjust="spacingAndGlyphs">2</text>
<rect x="330" y="185" width="1" height="1.4" fill="#3a3a3a"/>
<rect x="336" y="184" width="1" height="5" fill="#4a4a4a"/>
<rect x="342" y="185" width="1" height="1.4" fill="#3a3a3a"/>
<text x="346.3" y="189.0" font-size="9.5" font-weight="400" fill="#2a2a2a" textLength="4.7" lengthAdjust="spacingAndGlyphs">3</text>
<rect x="354" y="185" width="1" height="1.4" fill="#3a3a3a"/>
<rect x="360" y="184" width="1" height="5" fill="#4a4a4a"/>
<rect x="366" y="185" width="1" height="1.4" fill="#3a3a3a"/>
<text x="370.3" y="189.0" font-size="9.5" font-weight="400" fill="#2a2a2a" textLength="4.7" lengthAdjust="spacingAndGlyphs">4</text>
<rect x="378" y="185" width="1" height="1.4" fill="#3a3a3a"/>
<rect x="384" y="184" width="1" height="5" fill="#4a4a4a"/>
<rect x="390" y="185" width="1" height="1.4" fill="#3a3a3a"/>
<text x="394.3" y="189.0" font-size="9.5" font-weight="400" fill="#2a2a2a" textLength="4.7" lengthAdjust="spacingAndGlyphs">5</text>
<rect x="402" y="185" width="1" height="1.4" fill="#3a3a3a"/>
<rect x="408" y="184" width="1" height="5" fill="#4a4a4a"/>
<rect x="414" y="185" width="1" height="1.4" fill="#3a3a3a"/>
<text x="418.4" y="189.0" font-size="9.5" font-weight="400" fill="#2a2a2a" textLength="4.7" lengthAdjust="spacingAndGlyphs">6</text>
<rect x="426" y="185" width="1" height="1.4" fill="#3a3a3a"/>
<rect x="432" y="184" width="1" height="5" fill="#4a4a4a"/>
<rect x="438" y="185" width="1" height="1.4" fill="#3a3a3a"/>
<text x="442.4" y="189.0" font-size="9.5" font-weight="400" fill="#2a2a2a" textLength="4.7" lengthAdjust="spacingAndGlyphs">7</text>
<rect x="450" y="185" width="1" height="1.4" fill="#3a3a3a"/>
<rect x="456" y="184" width="1" height="5" fill="#4a4a4a"/>
<rect x="462" y="185" width="1" height="1.4" fill="#3a3a3a"/>
<text x="466.5" y="189.0" font-size="9.5" font-weight="400" fill="#2a2a2a" textLength="4.7" lengthAdjust="spacingAndGlyphs">8</text>
<rect x="474" y="185" width="1" height="1.4" fill="#3a3a3a"/>
<rect x="480" y="184" width="1" height="5" fill="#4a4a4a"/>
<rect x="486" y="185" width="1" height="1.4" fill="#3a3a3a"/>
<text x="490.5" y="189.0" font-size="9.5" font-weight="400" fill="#2a2a2a" textLength="4.7" lengthAdjust="spacingAndGlyphs">9</text>
<rect x="498" y="185" width="1" height="1.4" fill="#3a3a3a"/>
<rect x="504" y="184" width="1" height="5" fill="#4a4a4a"/>
<rect x="510" y="185" width="1" height="1.4" fill="#3a3a3a"/>
<text x="512.2" y="189.0" font-size="9.5" font-weight="400" fill="#2a2a2a" textLength="9.4" lengthAdjust="spacingAndGlyphs">10</text>
<rect x="522" y="185" width="1" height="1.4" fill="#3a3a3a"/>
<rect x="528" y="184" width="1" height="5" fill="#4a4a4a"/>
<rect x="534" y="185" width="1" height="1.4" fill="#3a3a3a"/>
<text x="536.2" y="189.0" font-size="9.5" font-weight="400" fill="#2a2a2a" textLength="9.4" lengthAdjust="spacingAndGlyphs">11</text>
<rect x="546" y="185" width="1" height="1.4" fill="#3a3a3a"/>
<rect x="552" y="184" width="1" height="5" fill="#4a4a4a"/>
<rect x="558" y="185" width="1" height="1.4" fill="#3a3a3a"/>
<text x="560.3" y="189.0" font-size="9.5" font-weight="400" fill="#2a2a2a" textLength="9.4" lengthAdjust="spacingAndGlyphs">12</text>
<rect x="570" y="185" width="1" height="1.4" fill="#3a3a3a"/>
<rect x="577" y="184" width="1" height="5" fill="#4a4a4a"/>
<rect x="583" y="185" width="1" height="1.4" fill="#3a3a3a"/>
<text x="584.3" y="189.0" font-size="9.5" font-weight="400" fill="#2a2a2a" textLength="9.4" lengthAdjust="spacingAndGlyphs">13</text>
<rect x="595" y="185" width="1" height="1.4" fill="#3a3a3a"/>
<rect x="601" y="184" width="1" height="5" fill="#4a4a4a"/>
<rect x="607" y="185" width="1" height="1.4" fill="#3a3a3a"/>
<text x="608.4" y="189.0" font-size="9.5" font-weight="400" fill="#2a2a2a" textLength="9.4" lengthAdjust="spacingAndGlyphs">14</text>
<rect x="619" y="185" width="1" height="1.4" fill="#3a3a3a"/>
<rect x="625" y="184" width="1" height="5" fill="#4a4a4a"/>
<rect x="631" y="185" width="1" height="1.4" fill="#3a3a3a"/>
<text x="632.4" y="189.0" font-size="9.5" font-weight="400" fill="#2a2a2a" textLength="9.4" lengthAdjust="spacingAndGlyphs">15</text>
<rect x="643" y="185" width="1" height="1.4" fill="#3a3a3a"/>
<rect x="649" y="184" width="1" height="5" fill="#4a4a4a"/>
<rect x="655" y="185" width="1" height="1.4" fill="#3a3a3a"/>
<text x="656.4" y="189.0" font-size="9.5" font-weight="400" fill="#2a2a2a" textLength="9.4" lengthAdjust="spacingAndGlyphs">16</text>
<rect x="667" y="185" width="1" height="1.4" fill="#3a3a3a"/>
<rect x="673" y="184" width="1" height="5" fill="#4a4a4a"/>
<path d="M272.5 177.5 H280.5 V181 L276.5 185.6 L272.5 181 Z" fill="#fff" stroke="#8c8c8c" stroke-width="0.9"/>
<path d="M272.5 192.2 L276.5 186.4 L280.5 192.2 Z" fill="#fff" stroke="#8c8c8c" stroke-width="0.9"/>
<rect x="272.5" y="192.2" width="8" height="6.2" fill="#fff" stroke="#8c8c8c" stroke-width="0.9"/>
<rect x="20.6" y="208.6" width="11.2" height="50.4" fill="#c6c6c6"/>
<rect x="20.6" y="259" width="11.2" height="445" fill="#ffffff"/>
<text transform="translate(31 213.2) rotate(-90)" font-size="9.5" fill="#2a2a2a" textLength="4.9" lengthAdjust="spacingAndGlyphs">2</text>
<rect x="27.8" y="216" width="1.4" height="1" fill="#3a3a3a"/>
<rect x="26" y="222" width="5" height="1" fill="#4a4a4a"/>
<rect x="27.8" y="228" width="1.4" height="1" fill="#3a3a3a"/>
<text transform="translate(31 237.2) rotate(-90)" font-size="9.5" fill="#2a2a2a" textLength="4.9" lengthAdjust="spacingAndGlyphs">1</text>
<rect x="27.8" y="240" width="1.4" height="1" fill="#3a3a3a"/>
<rect x="26" y="246" width="5" height="1" fill="#4a4a4a"/>
<rect x="27.8" y="252" width="1.4" height="1" fill="#3a3a3a"/>
<rect x="27.8" y="264" width="1.4" height="1" fill="#3a3a3a"/>
<rect x="26" y="270" width="5" height="1" fill="#4a4a4a"/>
<rect x="27.8" y="276" width="1.4" height="1" fill="#3a3a3a"/>
<text transform="translate(31 285.1) rotate(-90)" font-size="9.5" fill="#2a2a2a" textLength="4.9" lengthAdjust="spacingAndGlyphs">1</text>
<rect x="27.8" y="288" width="1.4" height="1" fill="#3a3a3a"/>
<rect x="26" y="294" width="5" height="1" fill="#4a4a4a"/>
<rect x="27.8" y="300" width="1.4" height="1" fill="#3a3a3a"/>
<text transform="translate(31 309.1) rotate(-90)" font-size="9.5" fill="#2a2a2a" textLength="4.9" lengthAdjust="spacingAndGlyphs">2</text>
<rect x="27.8" y="312" width="1.4" height="1" fill="#3a3a3a"/>
<rect x="26" y="318" width="5" height="1" fill="#4a4a4a"/>
<rect x="27.8" y="324" width="1.4" height="1" fill="#3a3a3a"/>
<text transform="translate(31 333.1) rotate(-90)" font-size="9.5" fill="#2a2a2a" textLength="4.9" lengthAdjust="spacingAndGlyphs">3</text>
<rect x="27.8" y="336" width="1.4" height="1" fill="#3a3a3a"/>
<rect x="26" y="342" width="5" height="1" fill="#4a4a4a"/>
<rect x="27.8" y="348" width="1.4" height="1" fill="#3a3a3a"/>
<text transform="translate(31 357.1) rotate(-90)" font-size="9.5" fill="#2a2a2a" textLength="4.9" lengthAdjust="spacingAndGlyphs">4</text>
<rect x="27.8" y="360" width="1.4" height="1" fill="#3a3a3a"/>
<rect x="26" y="366" width="5" height="1" fill="#4a4a4a"/>
<rect x="27.8" y="372" width="1.4" height="1" fill="#3a3a3a"/>
<text transform="translate(31 381.1) rotate(-90)" font-size="9.5" fill="#2a2a2a" textLength="4.9" lengthAdjust="spacingAndGlyphs">5</text>
<rect x="27.8" y="384" width="1.4" height="1" fill="#3a3a3a"/>
<rect x="26" y="390" width="5" height="1" fill="#4a4a4a"/>
<rect x="27.8" y="396" width="1.4" height="1" fill="#3a3a3a"/>
<text transform="translate(31 405.1) rotate(-90)" font-size="9.5" fill="#2a2a2a" textLength="4.9" lengthAdjust="spacingAndGlyphs">6</text>
<rect x="27.8" y="408" width="1.4" height="1" fill="#3a3a3a"/>
<rect x="26" y="414" width="5" height="1" fill="#4a4a4a"/>
<rect x="27.8" y="420" width="1.4" height="1" fill="#3a3a3a"/>
<text transform="translate(31 429.1) rotate(-90)" font-size="9.5" fill="#2a2a2a" textLength="4.9" lengthAdjust="spacingAndGlyphs">7</text>
<rect x="27.8" y="432" width="1.4" height="1" fill="#3a3a3a"/>
<rect x="26" y="438" width="5" height="1" fill="#4a4a4a"/>
<rect x="27.8" y="444" width="1.4" height="1" fill="#3a3a3a"/>
<text transform="translate(31 453.1) rotate(-90)" font-size="9.5" fill="#2a2a2a" textLength="4.9" lengthAdjust="spacingAndGlyphs">8</text>
<rect x="27.8" y="456" width="1.4" height="1" fill="#3a3a3a"/>
<rect x="26" y="462" width="5" height="1" fill="#4a4a4a"/>
<rect x="27.8" y="468" width="1.4" height="1" fill="#3a3a3a"/>
<text transform="translate(31 477.1) rotate(-90)" font-size="9.5" fill="#2a2a2a" textLength="4.9" lengthAdjust="spacingAndGlyphs">9</text>
<rect x="27.8" y="480" width="1.4" height="1" fill="#3a3a3a"/>
<rect x="26" y="486" width="5" height="1" fill="#4a4a4a"/>
<rect x="27.8" y="492" width="1.4" height="1" fill="#3a3a3a"/>
<text transform="translate(31 502.5) rotate(-90)" font-size="9.5" fill="#2a2a2a" textLength="9.8" lengthAdjust="spacingAndGlyphs">10</text>
<rect x="27.8" y="504" width="1.4" height="1" fill="#3a3a3a"/>
<rect x="26" y="510" width="5" height="1" fill="#4a4a4a"/>
<rect x="27.8" y="516" width="1.4" height="1" fill="#3a3a3a"/>
<text transform="translate(31 526.5) rotate(-90)" font-size="9.5" fill="#2a2a2a" textLength="9.8" lengthAdjust="spacingAndGlyphs">11</text>
<rect x="27.8" y="528" width="1.4" height="1" fill="#3a3a3a"/>
<rect x="26" y="534" width="5" height="1" fill="#4a4a4a"/>
<rect x="27.8" y="540" width="1.4" height="1" fill="#3a3a3a"/>
<text transform="translate(31 550.5) rotate(-90)" font-size="9.5" fill="#2a2a2a" textLength="9.8" lengthAdjust="spacingAndGlyphs">12</text>
<rect x="27.8" y="552" width="1.4" height="1" fill="#3a3a3a"/>
<rect x="26" y="558" width="5" height="1" fill="#4a4a4a"/>
<rect x="27.8" y="564" width="1.4" height="1" fill="#3a3a3a"/>
<text transform="translate(31 574.5) rotate(-90)" font-size="9.5" fill="#2a2a2a" textLength="9.8" lengthAdjust="spacingAndGlyphs">13</text>
<rect x="27.8" y="576" width="1.4" height="1" fill="#3a3a3a"/>
<rect x="26" y="582" width="5" height="1" fill="#4a4a4a"/>
<rect x="27.8" y="588" width="1.4" height="1" fill="#3a3a3a"/>
<text transform="translate(31 598.5) rotate(-90)" font-size="9.5" fill="#2a2a2a" textLength="9.8" lengthAdjust="spacingAndGlyphs">14</text>
<rect x="27.8" y="600" width="1.4" height="1" fill="#3a3a3a"/>
<rect x="26" y="606" width="5" height="1" fill="#4a4a4a"/>
<rect x="27.8" y="612" width="1.4" height="1" fill="#3a3a3a"/>
<text transform="translate(31 622.4) rotate(-90)" font-size="9.5" fill="#2a2a2a" textLength="9.8" lengthAdjust="spacingAndGlyphs">15</text>
<rect x="27.8" y="624" width="1.4" height="1" fill="#3a3a3a"/>
<rect x="26" y="630" width="5" height="1" fill="#4a4a4a"/>
<rect x="27.8" y="636" width="1.4" height="1" fill="#3a3a3a"/>
<text transform="translate(31 646.4) rotate(-90)" font-size="9.5" fill="#2a2a2a" textLength="9.8" lengthAdjust="spacingAndGlyphs">16</text>
<rect x="27.8" y="648" width="1.4" height="1" fill="#3a3a3a"/>
<rect x="26" y="654" width="5" height="1" fill="#4a4a4a"/>
<rect x="27.8" y="660" width="1.4" height="1" fill="#3a3a3a"/>
<text transform="translate(31 670.4) rotate(-90)" font-size="9.5" fill="#2a2a2a" textLength="9.8" lengthAdjust="spacingAndGlyphs">17</text>
<rect x="27.8" y="672" width="1.4" height="1" fill="#3a3a3a"/>
<rect x="26" y="678" width="5" height="1" fill="#4a4a4a"/>
<rect x="27.8" y="684" width="1.4" height="1" fill="#3a3a3a"/>
<text transform="translate(31 694.4) rotate(-90)" font-size="9.5" fill="#2a2a2a" textLength="9.8" lengthAdjust="spacingAndGlyphs">18</text>
<rect x="27.8" y="696" width="1.4" height="1" fill="#3a3a3a"/>
<rect x="26" y="702" width="5" height="1" fill="#4a4a4a"/>
<rect x="205.5" y="210.5" width="520" height="500" fill="#ffffff" stroke="#c6c6c6" stroke-width="1"/>
<line x1="277.5" y1="258" x2="277.5" y2="271" stroke="#000" stroke-width="1"/>
<rect x="16" y="704" width="872" height="18" fill="#f3f2f1"/>
<line x1="16" y1="704.5" x2="888" y2="704.5" stroke="#d4d2d0" stroke-width="1"/>
<text x="23.6" y="719.3" font-size="11.8" font-weight="400" fill="#3b3a39" textLength="45.8" lengthAdjust="spacingAndGlyphs">Раздел: 1</text>
<text x="87.7" y="719.3" font-size="11.8" font-weight="400" fill="#3b3a39" textLength="84.0" lengthAdjust="spacingAndGlyphs">Страница 1 из 2</text>
<text x="187.6" y="719.3" font-size="11.8" font-weight="400" fill="#3b3a39" textLength="48.2" lengthAdjust="spacingAndGlyphs">Строка: 1</text>
<text x="258.0" y="719.3" font-size="11.8" font-weight="400" fill="#3b3a39" textLength="69.8" lengthAdjust="spacingAndGlyphs">Число слов: 0</text>
<path d="M352 720.4 H347.4 V709.4 H352.2 C353 709.4 353.5 709.9 353.5 710.6 V716.6 M353.5 710.6 C353.5 709.9 354 709.4 354.8 709.4 H359.7 V715.2" fill="none" stroke="#3b3a39" stroke-width="1.15"/>
<path d="M352.2 718 L355.4 721.4 L360.8 716.2" fill="none" stroke="#3b3a39" stroke-width="1.1"/>
<path d="M481.4 708.6 H479.2 V711 M479.2 718.6 V721 H481.4 M490.6 721 H492.8 V718.6 M492.8 711 V708.6 H490.6" fill="none" stroke="#3b3a39" stroke-width="1"/>
<path d="M482.6 710.2 H487.4 L490.2 713 V719.8 H482.6 Z" fill="#fafafa" stroke="#3b3a39" stroke-width="1"/>
<path d="M487.2 710.4 V713.2 H490" fill="none" stroke="#3b3a39" stroke-width="0.9"/>
<text x="496.1" y="719.3" font-size="11.8" font-weight="400" fill="#3b3a39" textLength="68.6" lengthAdjust="spacingAndGlyphs">Фокусировка</text>
<path d="M590.4 708.8 H596.2 V719.6 H590.4 Z M597.2 708.8 H603 V719.6 H597.2 Z" fill="#fdfdfd" stroke="#3b3a39" stroke-width="0.9"/>
<line x1="591.8" y1="711.2" x2="595" y2="711.2" stroke="#3b3a39" stroke-width="0.8"/>
<line x1="598.6" y1="711.2" x2="601.8" y2="711.2" stroke="#3b3a39" stroke-width="0.8"/>
<line x1="591.8" y1="713.4" x2="595" y2="713.4" stroke="#3b3a39" stroke-width="0.8"/>
<line x1="598.6" y1="713.4" x2="601.8" y2="713.4" stroke="#3b3a39" stroke-width="0.8"/>
<line x1="591.8" y1="715.6" x2="595" y2="715.6" stroke="#3b3a39" stroke-width="0.8"/>
<line x1="598.6" y1="715.6" x2="601.8" y2="715.6" stroke="#3b3a39" stroke-width="0.8"/>
<line x1="591.8" y1="717.6" x2="595" y2="717.6" stroke="#3b3a39" stroke-width="0.8"/>
<line x1="598.6" y1="717.6" x2="601.8" y2="717.6" stroke="#3b3a39" stroke-width="0.8"/>
<rect x="617.2" y="705" width="39.8" height="17" fill="#c8c6c4"/>
<rect x="631.4" y="708.8" width="10.4" height="12.2" fill="#fdfdfd" stroke="#3b3a39" stroke-width="1"/>
<line x1="633" y1="711.4" x2="640.2" y2="711.4" stroke="#3b3a39" stroke-width="0.9"/>
<line x1="633" y1="713.6" x2="640.2" y2="713.6" stroke="#3b3a39" stroke-width="0.9"/>
<line x1="633" y1="715.8" x2="640.2" y2="715.8" stroke="#3b3a39" stroke-width="0.9"/>
<line x1="633" y1="718" x2="640.2" y2="718" stroke="#3b3a39" stroke-width="0.9"/>
<g filter="url(#pshadow)">
<rect x="657.5" y="173.5" width="240" height="95" fill="#ffffff" stroke="#d0d0d0" stroke-width="1" rx="2"/>
</g>
<rect x="658" y="174" width="240" height="74" fill="#ffffff"/>
<rect x="665.5" y="174" width="58" height="73" fill="#c6c6c6"/>
<rect x="679.5" y="182.5" width="29" height="23" fill="#ffffff" stroke="#3b3a39" stroke-width="1.1"/>
<text x="688.2" y="200.6" font-size="17.8" font-weight="400" fill="#2e8fd6" textLength="12.0" lengthAdjust="spacingAndGlyphs">A</text>
<rect x="678.2" y="181.2" width="2.6" height="2.6" fill="#ffffff" stroke="#2e8fd6" stroke-width="0.9"/>
<rect x="707.2" y="181.2" width="2.6" height="2.6" fill="#ffffff" stroke="#2e8fd6" stroke-width="0.9"/>
<rect x="678.2" y="204.2" width="2.6" height="2.6" fill="#ffffff" stroke="#2e8fd6" stroke-width="0.9"/>
<rect x="707.2" y="204.2" width="2.6" height="2.6" fill="#ffffff" stroke="#2e8fd6" stroke-width="0.9"/>
<text x="667.2" y="225.1" font-size="12.1" font-weight="400" fill="#262626" textLength="54.2" lengthAdjust="spacingAndGlyphs">Текстовое</text>
<text x="675.6" y="240.6" font-size="12.1" font-weight="400" fill="#262626" textLength="26.5" lengthAdjust="spacingAndGlyphs">поле</text>
<path d="M706.7 235.6 L708.9 238.2 L711.1 235.6" fill="none" stroke="#333" stroke-width="1.2" stroke-linecap="round" stroke-linejoin="round"/>
<rect x="744.7" y="180.5" width="20.6" height="27" fill="#fdfdfd" stroke="#3b3a39" stroke-width="1.1"/>
<rect x="754.5" y="183.4" width="7.4" height="7" fill="#cfe3f7" stroke="#2e8fd6" stroke-width="1"/>
<line x1="748" y1="194.8" x2="762" y2="194.8" stroke="#605e5c" stroke-width="1"/>
<rect x="748.2" y="198.6" width="13.6" height="4.6" fill="#c8c8c8" stroke="#797775" stroke-width="0.9"/>
<text x="727.4" y="225.1" font-size="12.1" font-weight="400" fill="#262626" textLength="54.8" lengthAdjust="spacingAndGlyphs">Экспресс-</text>
<text x="733.6" y="240.6" font-size="12.1" font-weight="400" fill="#262626" textLength="32.2" lengthAdjust="spacingAndGlyphs">блоки</text>
<path d="M771.0 235.6 L773.2 238.2 L775.4 235.6" fill="none" stroke="#333" stroke-width="1.2" stroke-linecap="round" stroke-linejoin="round"/>
<path d="M800.4 197.6 L821.8 181 L817.4 207" fill="none" stroke="#1e88d8" stroke-width="2.4" stroke-linecap="round" stroke-linejoin="round"/>
<path d="M808.2 191.6 C811 195.6 815.6 197.4 819.6 197" fill="none" stroke="#1e88d8" stroke-width="2.3" stroke-linecap="round"/>
<text x="788.6" y="225.1" font-size="12.1" font-weight="400" fill="#262626" textLength="43.8" lengthAdjust="spacingAndGlyphs">WordArt</text>
<path d="M808.3 235.1 L810.5 237.7 L812.7 235.1" fill="none" stroke="#333" stroke-width="1.2" stroke-linecap="round" stroke-linejoin="round"/>
<text x="846.6" y="199.0" font-size="25.6" font-weight="400" fill="#b4b4b4" textLength="16.4" lengthAdjust="spacingAndGlyphs">A</text>
<line x1="865.4" y1="183.4" x2="875" y2="183.4" stroke="#b4b4b4" stroke-width="1"/>
<line x1="865.4" y1="188.6" x2="875" y2="188.6" stroke="#b4b4b4" stroke-width="1"/>
<line x1="865.4" y1="193.8" x2="875" y2="193.8" stroke="#b4b4b4" stroke-width="1"/>
<line x1="865.4" y1="198.6" x2="875" y2="198.6" stroke="#b4b4b4" stroke-width="1"/>
<line x1="847.4" y1="203.5" x2="875" y2="203.5" stroke="#b4b4b4" stroke-width="1"/>
<text x="838.4" y="225.1" font-size="12.1" font-weight="400" fill="#a6a6a6" textLength="44.4" lengthAdjust="spacingAndGlyphs">Буквица</text>
<path d="M858.5 235.1 L860.7 237.7 L862.9 235.1" fill="none" stroke="#a6a6a6" stroke-width="1.1" stroke-linecap="round" stroke-linejoin="round"/>
<g filter="url(#pshadow)">
<rect x="664.5" y="248.5" width="240" height="480" fill="#ffffff" stroke="#c6c6c6" stroke-width="1"/>
</g>
<rect x="665" y="249" width="223" height="23" fill="#fdfdfd"/>
<text x="680.5" y="267.7" font-size="12.2" font-weight="700" fill="#1f1f3a" textLength="70.9" lengthAdjust="spacingAndGlyphs">Встроенный</text>
<rect x="679.5" y="282.5" width="108" height="152.5" fill="#ffffff" stroke="#000000" stroke-width="1.2"/>
<rect x="815.5" y="282.5" width="108" height="152.5" fill="#ffffff" stroke="#000000" stroke-width="1.2"/>
<rect x="679.5" y="459.5" width="108" height="151.5" fill="#ffffff" stroke="#000000" stroke-width="1.2"/>
<rect x="815.5" y="459.5" width="108" height="151.5" fill="#ffffff" stroke="#000000" stroke-width="1.2"/>
<rect x="679.5" y="636.6" width="108" height="70" fill="#ffffff" stroke="#000000" stroke-width="1.2"/>
<rect x="815.5" y="636.6" width="108" height="70" fill="#ffffff" stroke="#000000" stroke-width="1.2"/>
<rect x="720.3" y="295.3" width="34.2" height="21.2" fill="#ffffff" stroke="#bdbdbd" stroke-width="0.8"/>
<line x1="722" y1="297.6" x2="753" y2="297.6" stroke="#333333" stroke-width="1.5" stroke-dasharray="4 0.5 2.5 0.5 5 0.5 3 0.5" stroke-dashoffset="0.0"/>
<line x1="722" y1="300.2" x2="746" y2="300.2" stroke="#333333" stroke-width="1.5" stroke-dasharray="4 0.5 2.5 0.5 5 0.5 3 0.5" stroke-dashoffset="2.3"/>
<line x1="722" y1="302.8" x2="750" y2="302.8" stroke="#333333" stroke-width="1.5" stroke-dasharray="4 0.5 2.5 0.5 5 0.5 3 0.5" stroke-dashoffset="4.6"/>
<line x1="722" y1="305.4" x2="753" y2="305.4" stroke="#333333" stroke-width="1.5" stroke-dasharray="4 0.5 2.5 0.5 5 0.5 3 0.5" stroke-dashoffset="6.9"/>
<line x1="722" y1="308" x2="748" y2="308" stroke="#333333" stroke-width="1.5" stroke-dasharray="4 0.5 2.5 0.5 5 0.5 3 0.5" stroke-dashoffset="9.2"/>
<line x1="722" y1="310.6" x2="749" y2="310.6" stroke="#333333" stroke-width="1.5" stroke-dasharray="4 0.5 2.5 0.5 5 0.5 3 0.5" stroke-dashoffset="11.5"/>
<line x1="722" y1="313.2" x2="752" y2="313.2" stroke="#333333" stroke-width="1.5" stroke-dasharray="4 0.5 2.5 0.5 5 0.5 3 0.5" stroke-dashoffset="13.8"/>
<rect x="728.5" y="524" width="51.4" height="19" fill="#ffffff" stroke="#cccccc" stroke-width="0.8"/>
<line x1="730" y1="527.6" x2="778" y2="527.6" stroke="#7c7c7c" stroke-width="1.5" stroke-dasharray="5 0.6 3 0.5 6 0.6 2 0.5 4 0.6" stroke-dashoffset="0.0"/>
<line x1="730" y1="530.8" x2="776" y2="530.8" stroke="#7c7c7c" stroke-width="1.5" stroke-dasharray="5 0.6 3 0.5 6 0.6 2 0.5 4 0.6" stroke-dashoffset="3.1"/>
<line x1="730" y1="533.9" x2="777.5" y2="533.9" stroke="#7c7c7c" stroke-width="1.5" stroke-dasharray="5 0.6 3 0.5 6 0.6 2 0.5 4 0.6" stroke-dashoffset="6.2"/>
<line x1="730" y1="537" x2="778" y2="537" stroke="#7c7c7c" stroke-width="1.5" stroke-dasharray="5 0.6 3 0.5 6 0.6 2 0.5 4 0.6" stroke-dashoffset="9.3"/>
<line x1="730" y1="540.2" x2="772" y2="540.2" stroke="#7c7c7c" stroke-width="1.5" stroke-dasharray="5 0.6 3 0.5 6 0.6 2 0.5 4 0.6" stroke-dashoffset="12.4"/>
<rect x="728.2" y="543" width="52" height="4" fill="#000000"/>
<path d="M682.4 639.6 H691.9 L688.6 696 H682.4 Z" fill="#6a8fd4"/>
<path d="M682.4 639.6 H684.8 L685.6 696 H682.4 Z" fill="#4472c4"/>
<line x1="692.6" y1="651.2" x2="720" y2="651.2" stroke="#8fb0e0" stroke-width="1"/>
<line x1="692.6" y1="654.3" x2="720.6" y2="654.3" stroke="#cfcfcf" stroke-width="1"/>
<line x1="692.6" y1="656.6" x2="717.6" y2="656.6" stroke="#cfcfcf" stroke-width="1"/>
<line x1="692.6" y1="658.9" x2="721.6" y2="658.9" stroke="#cfcfcf" stroke-width="1"/>
<line x1="692.6" y1="661.4" x2="720.6" y2="661.4" stroke="#cfcfcf" stroke-width="1"/>
<line x1="692.6" y1="663.6" x2="716.6" y2="663.6" stroke="#cfcfcf" stroke-width="1"/>
<line x1="692.6" y1="665.8" x2="711.6" y2="665.8" stroke="#cfcfcf" stroke-width="1"/>
<line x1="692.6" y1="669.8" x2="721.6" y2="669.8" stroke="#cfcfcf" stroke-width="1"/>
<line x1="692.6" y1="672.2" x2="718.6" y2="672.2" stroke="#cfcfcf" stroke-width="1"/>
<line x1="692.6" y1="674.6" x2="721.6" y2="674.6" stroke="#cfcfcf" stroke-width="1"/>
<line x1="692.6" y1="677" x2="703.6" y2="677" stroke="#cfcfcf" stroke-width="1"/>
<line x1="692.6" y1="681.1" x2="720.6" y2="681.1" stroke="#cfcfcf" stroke-width="1"/>
<line x1="692.6" y1="683.4" x2="718.6" y2="683.4" stroke="#cfcfcf" stroke-width="1"/>
<line x1="692.6" y1="685.8" x2="696.6" y2="685.8" stroke="#cfcfcf" stroke-width="1"/>
<line x1="881.6" y1="651.2" x2="888" y2="651.2" stroke="#8fb0e0" stroke-width="1"/>
<line x1="881.6" y1="654.3" x2="888" y2="654.3" stroke="#cfcfcf" stroke-width="1"/>
<line x1="881.6" y1="656.6" x2="888" y2="656.6" stroke="#cfcfcf" stroke-width="1"/>
<line x1="881.6" y1="658.9" x2="888" y2="658.9" stroke="#cfcfcf" stroke-width="1"/>
<line x1="881.6" y1="661.4" x2="888" y2="661.4" stroke="#cfcfcf" stroke-width="1"/>
<line x1="881.6" y1="663.6" x2="888" y2="663.6" stroke="#cfcfcf" stroke-width="1"/>
<line x1="881.6" y1="665.8" x2="888" y2="665.8" stroke="#cfcfcf" stroke-width="1"/>
<line x1="881.6" y1="669.8" x2="888" y2="669.8" stroke="#cfcfcf" stroke-width="1"/>
<line x1="881.6" y1="672.2" x2="888" y2="672.2" stroke="#cfcfcf" stroke-width="1"/>
<line x1="881.6" y1="674.6" x2="888" y2="674.6" stroke="#cfcfcf" stroke-width="1"/>
<line x1="881.6" y1="677" x2="888" y2="677" stroke="#cfcfcf" stroke-width="1"/>
<line x1="881.6" y1="681.1" x2="888" y2="681.1" stroke="#cfcfcf" stroke-width="1"/>
<line x1="881.6" y1="683.4" x2="888" y2="683.4" stroke="#cfcfcf" stroke-width="1"/>
<line x1="881.6" y1="685.8" x2="888" y2="685.8" stroke="#cfcfcf" stroke-width="1"/>
<text x="688.3" y="448.3" font-size="12.1" font-weight="400" fill="#3b3a39" textLength="93.9" lengthAdjust="spacingAndGlyphs">Простая надпись</text>
<text x="809.0" y="448.3" font-size="12.1" font-weight="400" fill="#3b3a39" textLength="78.6" lengthAdjust="spacingAndGlyphs">ViewMaster —</text>
<text x="672.3" y="625.7" font-size="12.1" font-weight="400" fill="#3b3a39" textLength="123.1" lengthAdjust="spacingAndGlyphs">ViewMaster — цитата...</text>
<text x="807.5" y="625.7" font-size="12.1" font-weight="400" fill="#3b3a39" textLength="81.1" lengthAdjust="spacingAndGlyphs">Боковая линия</text>
<rect x="886" y="292.4" width="3" height="8.4" fill="#a0a0a0"/>
<rect x="665" y="697" width="223" height="25" fill="#ffffff"/>
<line x1="665" y1="697.5" x2="888" y2="697.5" stroke="#d6d6d6" stroke-width="1"/>
<circle cx="686" cy="711.6" r="7.3" fill="none" stroke="#3b3a39" stroke-width="1.1"/>
<ellipse cx="686" cy="711.6" rx="3.3" ry="7.3" fill="none" stroke="#3b3a39" stroke-width="1"/>
<line x1="679" y1="709.2" x2="693" y2="709.2" stroke="#3b3a39" stroke-width="1"/>
<line x1="679" y1="714" x2="693" y2="714" stroke="#3b3a39" stroke-width="1"/>
<rect x="683.2" y="713.2" width="12" height="7.4" fill="#ffffff"/>
<path d="M684.2 716 H693.4 M690.6 713.3 L693.5 716 L690.6 718.7" fill="none" stroke="#2488d8" stroke-width="1.4"/>
<text x="702.7" y="717.0" font-size="12.1" font-weight="400" fill="#262626" textLength="186.5" lengthAdjust="spacingAndGlyphs">Дополнительные надписи с сайта</text>
<line x1="713" y1="719.2" x2="718.4" y2="719.2" stroke="#262626" stroke-width="0.9"/>
</g>
<rect x="128.5" y="41.8" width="58.9" height="44.5" rx="8" fill="none" stroke="#ff0000" stroke-width="4.0" filter="url(#ds)"/>
<rect x="655.5" y="76.6" width="57.9" height="74.7" rx="8" fill="none" stroke="#ff0000" stroke-width="4.2" filter="url(#ds)"/>
<rect x="662.7" y="172.6" width="63.5" height="75.9" rx="8" fill="none" stroke="#ff0000" stroke-width="4.2" filter="url(#ds)"/>
<rect x="667.8" y="274.5" width="129.0" height="182.6" rx="8" fill="none" stroke="#ff0000" stroke-width="4.2" filter="url(#ds)"/>
<g filter="url(#ds2)"><circle cx="198.6" cy="94.8" r="23.2" fill="url(#badge)" stroke="#cf3208" stroke-width="1"/></g>
<g font-size="27.4" font-weight="700" text-anchor="middle" stroke-linejoin="round"><text x="198.0" y="104.6" fill="#1a1a1a" stroke="#1a1a1a" stroke-width="3.8">1</text><text x="198.0" y="104.6" fill="#ffffff" stroke="#ffffff" stroke-width="1.1">1</text></g>
<g filter="url(#ds2)"><circle cx="718.6" cy="63.8" r="23.2" fill="url(#badge)" stroke="#cf3208" stroke-width="1"/></g>
<g font-size="27.4" font-weight="700" text-anchor="middle" stroke-linejoin="round"><text x="718.0" y="73.6" fill="#1a1a1a" stroke="#1a1a1a" stroke-width="3.8">2</text><text x="718.0" y="73.6" fill="#ffffff" stroke="#ffffff" stroke-width="1.1">2</text></g>
<g filter="url(#ds2)"><circle cx="740.9" cy="174.2" r="23.2" fill="url(#badge)" stroke="#cf3208" stroke-width="1"/></g>
<g font-size="27.4" font-weight="700" text-anchor="middle" stroke-linejoin="round"><text x="740.3" y="184.0" fill="#1a1a1a" stroke="#1a1a1a" stroke-width="3.8">3</text><text x="740.3" y="184.0" fill="#ffffff" stroke="#ffffff" stroke-width="1.1">3</text></g>
<g filter="url(#ds2)"><circle cx="800.5" cy="265.3" r="23.2" fill="url(#badge)" stroke="#cf3208" stroke-width="1"/></g>
<g font-size="27.4" font-weight="700" text-anchor="middle" stroke-linejoin="round"><text x="799.9" y="275.1" fill="#1a1a1a" stroke="#1a1a1a" stroke-width="3.8">4</text><text x="799.9" y="275.1" fill="#ffffff" stroke="#ffffff" stroke-width="1.1">4</text></g>
</svg>
</body>
</html>
